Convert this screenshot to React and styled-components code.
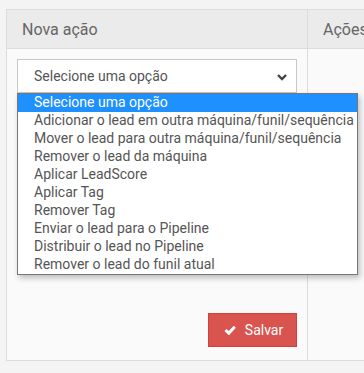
import React from "react";
import styled, { createGlobalStyle } from "styled-components";

const GlobalStyle = createGlobalStyle`
  * { box-sizing: border-box; }
  body {
    margin: 0;
    background: #f4f4f4;
    font-family: Roboto, "Liberation Sans", sans-serif;
    color: #555;
  }
`;

const Page = styled.div`
  width: 364px;
  height: 373px;
  padding: 9px 0 0 6px;
  overflow: hidden;
`;

const Table = styled.div`
  display: grid;
  grid-template-columns: 301px 100px;
  grid-template-rows: 39px 311px;
  border: 1px solid #dcdcdc;
  border-right: none;
  width: 420px;
`;

const HeadCell = styled.div`
  background: #ebebeb;
  border-bottom: 1px solid #dcdcdc;
  border-right: ${(p) => (p.$last ? "none" : "1px solid #dcdcdc")};
  display: flex;
  align-items: center;
  padding-left: 15px;
  font-size: 16px;
  color: #666;
`;

const BodyCell = styled.div`
  background: #fafafa;
  border-right: ${(p) => (p.$last ? "none" : "1px solid #dcdcdc")};
  padding: 10px 10px 13px 10px;
  display: flex;
  flex-direction: column;
  position: relative;
`;

const SelectBox = styled.div`
  height: 34px;
  width: 280px;
  background: #fff;
  border: 1px solid #c8c8c8;
  display: flex;
  align-items: center;
  justify-content: space-between;
  padding: 0 8px 0 16px;
  font-size: 14px;
  color: #555;
`;

const Dropdown = styled.ul`
  position: absolute;
  top: 44px;
  left: 10px;
  width: 341px;
  margin: 0;
  padding: 0;
  list-style: none;
  background: #fff;
  border: 1px solid #767676;
  box-shadow: 2px 3px 6px rgba(0, 0, 0, 0.25);
  z-index: 2;
`;

const Option = styled.li`
  height: 18px;
  line-height: 17px;
  padding-left: 16px;
  font-size: 14px;
  white-space: nowrap;
  background: ${(p) => (p.$active ? "#1e90ff" : "transparent")};
  color: ${(p) => (p.$active ? "#fff" : "#555")};
`;

const Footer = styled.div`
  margin-top: auto;
  display: flex;
  justify-content: flex-end;
`;

const SaveButton = styled.button`
  width: 89px;
  height: 34px;
  background: #d9534f;
  border: 1px solid #d43f3a;
  color: #fff;
  font-family: Roboto, "Liberation Sans", sans-serif;
  font-size: 14px;
  display: flex;
  align-items: center;
  justify-content: center;
  gap: 9px;
  padding: 0 0 0 2px;
`;

const options = [
  "Selecione uma opção",
  "Adicionar o lead em outra máquina/funil/sequência",
  "Mover o lead para outra máquina/funil/sequência",
  "Remover o lead da máquina",
  "Aplicar LeadScore",
  "Aplicar Tag",
  "Remover Tag",
  "Enviar o lead para o Pipeline",
  "Distribuir o lead no Pipeline",
  "Remover o lead do funil atual",
];

const Chevron = () => (
  <svg width="12" height="9" viewBox="0 0 12 9">
    <path d="M2 3 L6 7 L10 3" fill="none" stroke="#444" strokeWidth="2.4" />
  </svg>
);

const Check = () => (
  <svg width="12" height="10" viewBox="0 0 12 10">
    <path d="M1.5 5 L4.8 8.2 L10.8 1.8" fill="none" stroke="#fff" strokeWidth="3" />
  </svg>
);

export default function App() {
  return (
    <>
      <GlobalStyle />
      <Page>
        <Table>
          <HeadCell>Nova ação</HeadCell>
          <HeadCell $last>Ações</HeadCell>
          <BodyCell>
            <SelectBox>
              <span>Selecione uma opção</span>
              <Chevron />
            </SelectBox>
            <Dropdown>
              {options.map((o, i) => (
                <Option key={o} $active={i === 0}>
                  {o}
                </Option>
              ))}
            </Dropdown>
            <Footer>
              <SaveButton>
                <Check />
                Salvar
              </SaveButton>
            </Footer>
          </BodyCell>
          <BodyCell $last />
        </Table>
      </Page>
    </>
  );
}
